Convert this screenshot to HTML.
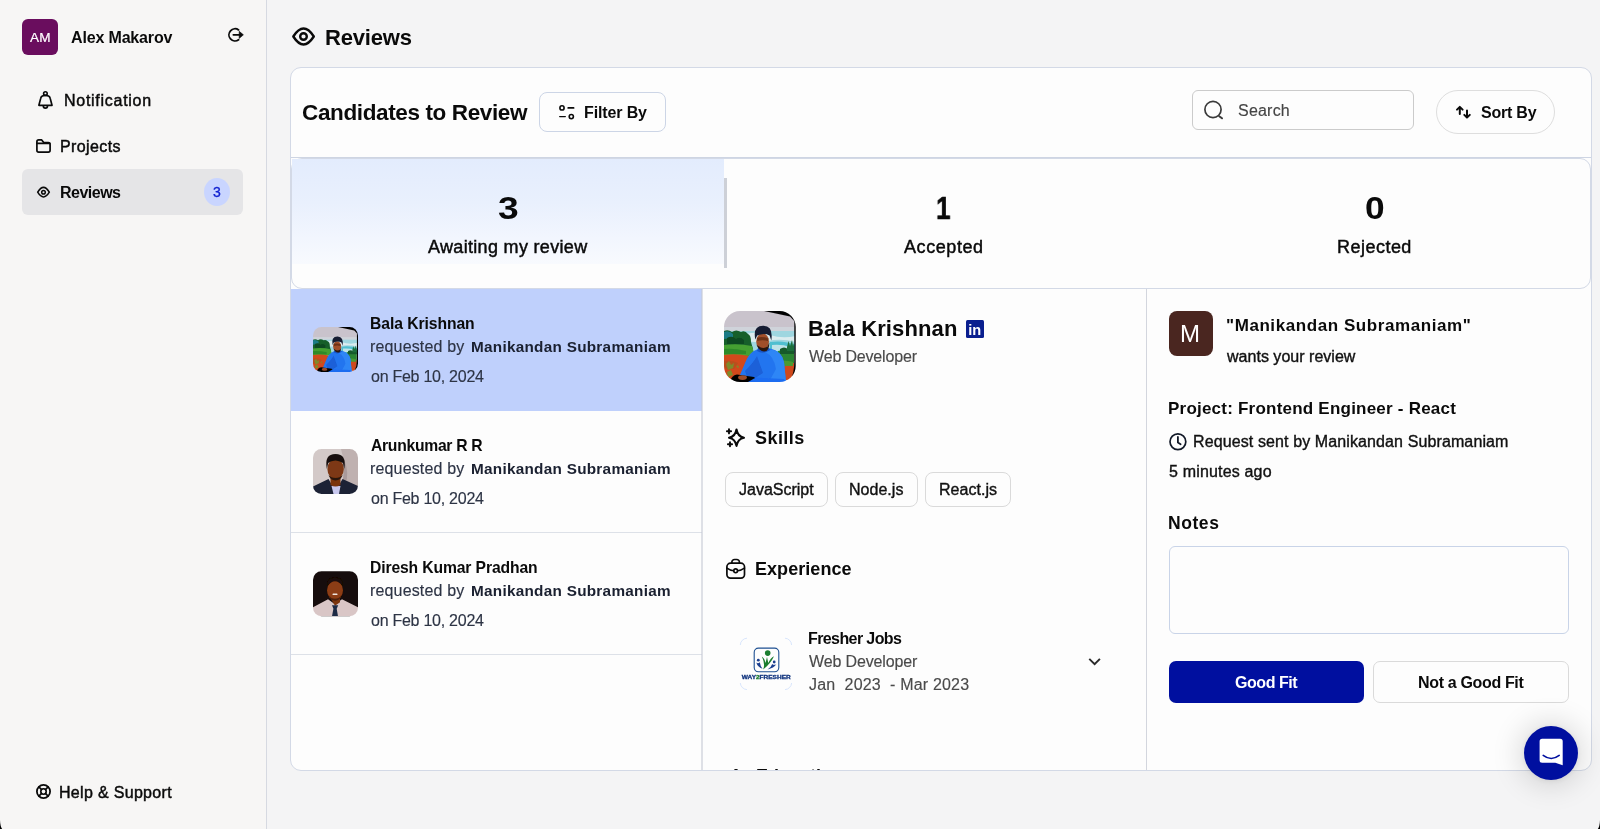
<!DOCTYPE html>
<html lang="en">
<head>
<meta charset="utf-8">
<title>Reviews</title>
<style>
*{box-sizing:border-box;margin:0;padding:0}
html,body{width:1600px;height:829px;overflow:hidden}
body{font-family:"Liberation Sans",sans-serif;background:#f4f4f5;color:#0a0a0a;position:relative}
.abs{position:absolute}
.t{position:absolute;white-space:nowrap;line-height:1;will-change:transform}
svg{position:absolute;overflow:visible}
.ic{fill:none;stroke:#0a0a0a;stroke-linecap:round;stroke-linejoin:round}
#side{left:0;top:0;width:267px;height:829px;background:#f7f6f5;border-right:1px solid #d6d9e1}
#ambox{left:22px;top:19px;width:36px;height:36px;border-radius:6px;background:#6a0d5e}
#active{left:22px;top:169px;width:221px;height:46px;border-radius:6px;background:#e5e5e7}
#badge{left:204px;top:178px;width:26px;height:28px;border-radius:50%;background:#c9d5ff}
#card{left:290px;top:67px;width:1302px;height:704px;border:1px solid #d3d9e6;border-radius:11px;background:#fdfdfd}
#hdrline{left:291px;top:157px;width:1300px;height:1px;background:#ced5e3}
#stats{left:291px;top:158px;width:1300px;height:131px;border:1px solid #d3d9e6;border-radius:11px;background:#fdfdfd}
#await{left:292px;top:158.6px;width:432px;height:105.6px;background:linear-gradient(#e3ecfd 0%,#e9f0fd 42%,#f2f6fe 76%,#f8fafe 100%)}
#vbar{left:724px;top:178px;width:3px;height:90px;background:#cdd0d7}
.btn{position:absolute;border:1px solid #ccd5e6;background:#fdfdfd}
#filter{left:539px;top:92px;width:127px;height:40px;border-radius:8px}
#search{left:1192px;top:90px;width:222px;height:40px;border-radius:6px;border-color:#cbcbcb}
#sort{left:1436px;top:90px;width:119px;height:44px;border-radius:22px;border-color:#dedede}
#sel{left:291px;top:289px;width:410.5px;height:121.6px;background:#bfd0fc}
.hl{position:absolute;left:291px;width:411px;height:1px;background:#dde1e8}
.vl{position:absolute;top:289px;width:1px;height:481px;background:#d3d6de}
.av{position:absolute;left:313px;width:45px;height:45px;border-radius:9px;overflow:hidden}
.chip{position:absolute;top:471.5px;height:35px;border:1px solid #dadada;border-radius:8px;background:#fdfdfd}
</style>
</head>
<body>
<div id="side" class="abs"></div>
<div id="ambox" class="abs"></div>
<div id="active" class="abs"></div>
<div id="badge" class="abs"></div>
<div id="card" class="abs"></div>
<div id="hdrline" class="abs"></div>
<div id="filter" class="btn"></div>
<div id="search" class="btn"></div>
<div id="sort" class="btn"></div>
<div id="stats" class="abs"></div><div id="await" class="abs"></div>
<div id="vbar" class="abs"></div>
<div id="sel" class="abs"></div>
<div class="hl" style="top:532px"></div>
<div class="hl" style="top:654px"></div>
<div class="vl" style="left:701px;width:2px;background:rgba(196,201,212,.55)"></div>
<div class="vl" style="left:1146px"></div>
<div class="abs" id="li" style="left:965.5px;top:319.5px;width:18.5px;height:18px;background:#0a1f8f;border-radius:1.5px"></div>
<div class="chip" style="left:724.5px;width:103.5px"></div>
<div class="chip" style="left:835px;width:82.5px"></div>
<div class="chip" style="left:924.5px;width:86.5px"></div>
<div class="abs" id="mbox" style="left:1169px;top:311px;width:44px;height:45px;border-radius:8px;background:#4a2620"></div>
<div class="abs" id="ta" style="left:1169px;top:545.5px;width:399.5px;height:88px;border:1px solid #c9d4e8;border-radius:6px;background:#fdfdfd"></div>
<div class="abs" id="gfb" style="left:1169px;top:661px;width:195px;height:42px;border-radius:7px;background:#000f9f"></div>
<div class="abs" id="ngfb" style="left:1373px;top:661px;width:195.5px;height:42px;border-radius:7px;border:1px solid #dadada;background:#fdfdfd"></div>
<div class="abs" id="chat" style="left:1524px;top:725.5px;width:54px;height:54px;border-radius:50%;background:#000f9f;box-shadow:0 1px 28px 6px rgba(0,0,0,.13),0 1px 5px rgba(0,0,0,.08)"></div>
<div class="abs" style="left:703px;top:760px;width:442px;height:10px;overflow:hidden"><div class="t" style="left:53px;top:7.4px;font-size:18px;font-weight:700">Education</div><div class="abs" style="left:31px;top:9.2px;width:4px;height:3px;background:#0a0a0a;border-radius:2px"></div></div>
<svg width="1600" height="829" viewBox="0 0 1600 829" style="left:0;top:0">
<defs>
<filter id="bl1" x="-5%" y="-5%" width="110%" height="110%"><feGaussianBlur stdDeviation="0.55"/></filter>
<filter id="bl2" x="-5%" y="-5%" width="110%" height="110%"><feGaussianBlur stdDeviation="0.45"/></filter>
<clipPath id="cp0"><rect x="313" y="327" width="45" height="45" rx="8.5"/></clipPath>
<clipPath id="cp1"><rect x="313" y="449" width="45" height="45" rx="8.5"/></clipPath>
<clipPath id="cp2"><rect x="313" y="571.3" width="45" height="45" rx="8.5"/></clipPath>
<clipPath id="cpp"><rect x="724" y="311" width="71.7" height="71" rx="16"/></clipPath>
<g id="bala">
  <rect x="-3" y="-3" width="78" height="77" fill="#c9c3cc"/>
  <rect x="0" y="16" width="72" height="6" fill="#cfd3da"/>
  <rect x="0" y="20" width="72" height="22" fill="#9fd6e0"/>
  <path d="M22,23 Q34,20 46,24 T72,25 V31 Q56,27 44,30 T22,29Z" fill="#dcecef"/>
  <path d="M46,31 Q60,29 72,34 V42 H46Z" fill="#4fbfd0"/>
  <path d="M48,34 Q58,33 66,36 L66,40 H48Z" fill="#bfe3e8"/>
  <path d="M0,20 Q4,18 8,21 Q12,18 17,21 Q21,19 24,23 Q27,24 27,31 L29,38 L0,38Z" fill="#185f2c"/>
  <path d="M0,21 Q5,19 9,23 L9,27 L0,28Z" fill="#1c7b86"/>
  <path d="M3,27 Q8,24 12,28 Q16,25 20,29 L20,33 H3Z" fill="#0f4a22"/>
  <path d="M0,34 Q14,32 28,35 L31,45 H0Z" fill="#44a030"/>
  <path d="M0,38 Q10,37 22,40 L22,43 H0Z" fill="#2f8a2b"/>
  <path d="M54,40 Q62,37 70,40 V53 H54Z" fill="#2c8533"/>
  <path d="M56,38 Q60,35 64,38 Q67,34 70,37 V43 H56Z" fill="#165a2c"/>
  <path d="M63,36 l1.5,-6 1.5,5 2,-6 1,6 1,-3 v8 h-7Z" fill="#1f6e3a"/>
  <path d="M0,44 Q12,42 25,45 L20,71 H0Z" fill="#d2481b"/>
  <path d="M0,50 Q8,49 14,52 L10,58 L0,57Z" fill="#b9501f"/>
  <path d="M53,52 H70 V69 H53Z" fill="#cf4a1c"/>
  <path d="M56,50 Q62,49 69,51 V55 H56Z" fill="#4a9a30"/>
  <path d="M2,53 l3,-3 2,4 3,-2 -1,5 -5,2Z M3,61 l4,-2 2,5 -5,2Z M12,56 l2,-2 1,3Z" fill="#7f8a2a"/>
  <path d="M13,71 L21,52 Q25,41 33,38.5 L46,37.5 Q58,40 60,51 L62,71Z" fill="#2475ef"/>
  <path d="M21,60 Q30,51 33,45 L39,62 L25,71Z" fill="#1a60d8"/>
  <path d="M41,41 Q50,45 52,58 L45,71 L62,71 60,51 Q58,41 48,38.5Z" fill="#2f86f6"/>
  <path d="M33,40 Q39,44 46,39 L45,37 H34Z" fill="#1857c8"/>
  <ellipse cx="38.6" cy="30.5" rx="6.4" ry="8" fill="#a14f2a"/>
  <path d="M33,27 Q38,25 44.5,27.5 L44,30 Q38.5,28.5 33.3,30Z" fill="#6d3219"/>
  <path d="M32.6,34 Q36,42 42.5,40 Q45.5,37 45.3,31.5 L43.6,35.5 Q39,38.5 34.4,35Z" fill="#2b1711"/>
  <path d="M31.3,28.5 Q28.5,14.5 39.5,14.8 Q49.5,15 47.3,29.5 L45.6,24.5 Q40,21.5 33.2,24.6Z" fill="#131c33"/>
  <path d="M6,71 Q7,64.5 13,63.5 L30,66 L35,71Z" fill="#050505"/>
  <ellipse cx="18.5" cy="66.6" rx="4.4" ry="2.4" fill="#9c4d2a"/>
  <path d="M24,71 L32,66.5 L60,68 L62,71Z" fill="#1f6cf0"/>
  <path d="M40,0 H72 V12 L66,5.5Z" fill="#050505"/>
  <path d="M70.3,9 H72 V66 L68,71 H66 Q70.3,62 70.3,50Z" fill="#050505"/>
</g>
</defs>
<path d="M0,820 Q0.2,826.5 2.2,829 H0Z M1600,820 Q1599.8,826.5 1597.8,829 H1600Z" fill="#000"/>
<!-- logout -->
<path class="ic" stroke-width="1.8" d="M238.6,29.9 A6.1,6.1 0 1 0 238.6,39.8"/>
<path class="ic" stroke-width="1.9" stroke-linecap="butt" d="M233.4,34.85 H240"/>
<path d="M239.2,31.3 L243.4,34.85 L239.2,38.4Z" fill="#0a0a0a" stroke="#0a0a0a" stroke-width=".6" stroke-linejoin="round"/>
<!-- bell -->
<circle class="ic" stroke-width="1.6" cx="45.4" cy="93.6" r="1.8"/>
<path class="ic" stroke-width="1.7" d="M38.9,105.3 H52 L50.2,98.4 C49.6,95.6 47.6,95.4 45.4,95.4 C43.2,95.4 41.2,95.6 40.7,98.4 Z"/>
<path class="ic" stroke-width="1.7" d="M43.3,105.8 A2.1,2.4 0 0 0 47.5,105.8"/>
<!-- folder -->
<path class="ic" stroke-width="1.7" d="M36.9,150.3 V141.7 A1.8,1.8 0 0 1 38.7,139.9 H41.7 L43.7,142.6 H48.3 A1.8,1.8 0 0 1 50.1,144.4 V150.3 A1.8,1.8 0 0 1 48.3,152.1 H38.7 A1.8,1.8 0 0 1 36.9,150.3 Z"/>
<path class="ic" stroke-width="1.6" d="M37,143.4 H49.8"/>
<!-- eye small -->
<path class="ic" stroke-width="1.6" d="M37.7,192.2 Q43.5,182.6 49.3,192.2 Q43.5,201.7 37.7,192.2Z"/>
<circle class="ic" stroke-width="1.5" cx="43.5" cy="192.2" r="1.8"/>
<!-- lifebuoy -->
<circle class="ic" stroke-width="1.8" cx="43.5" cy="791.5" r="6.6"/>
<circle class="ic" stroke-width="1.6" cx="43.5" cy="791.5" r="2.7"/>
<path class="ic" stroke-width="1.6" d="M38.9,786.9 L41.6,789.6 M48.1,786.9 L45.4,789.6 M38.9,796.1 L41.6,793.4 M48.1,796.1 L45.4,793.4"/>
<!-- eye large -->
<path class="ic" stroke-width="2.4" d="M293.3,36.5 Q303.5,20.6 313.8,36.5 Q303.5,52.4 293.3,36.5Z"/>
<circle class="ic" stroke-width="2.4" cx="303.5" cy="36.5" r="3.3"/>
<!-- filter -->
<circle class="ic" stroke-width="1.6" cx="562" cy="107.9" r="2.1"/>
<path class="ic" stroke-width="1.7" d="M568.2,107.9 H573.6"/>
<path class="ic" stroke-width="1.4" d="M559.7,116.6 H565.3"/>
<circle class="ic" stroke-width="1.6" cx="571.3" cy="116.6" r="2.1"/>
<!-- search -->
<circle cx="1213" cy="109.5" r="8.1" fill="none" stroke="#3a3a3a" stroke-width="1.7"/>
<path d="M1219.2,116.2 L1222,118.3" stroke="#3a3a3a" stroke-width="2" stroke-linecap="round"/>
<!-- sort -->
<path class="ic" stroke-width="2" d="M1459.8,114 V107.3 M1457,109.6 L1459.8,106.9 L1462.6,109.6"/>
<path class="ic" stroke-width="2" d="M1467,110.6 V117.4 M1464.3,114.9 L1467,117.6 L1469.8,114.9"/>
<!-- sparkle -->
<path class="ic" stroke-width="2.1" d="M736.5,429.5 Q737.7,436.5 744,437.7 Q737.7,438.9 736.5,445.9 Q735.3,438.9 729,437.7 Q735.3,436.5 736.5,429.5Z"/>
<path class="ic" stroke-width="1.9" d="M729,429.2 V433.4 M726.9,431.3 H731.1 M730,442.1 V446.3 M727.9,444.2 H732.1"/>
<!-- briefcase -->
<rect class="ic" stroke-width="1.7" x="726.9" y="563.2" width="17.6" height="14.9" rx="3.6"/>
<path class="ic" stroke-width="1.7" d="M731.9,563.2 V562.1 A2.6,2.6 0 0 1 734.5,559.5 H736.8 A2.6,2.6 0 0 1 739.4,562.1 V563.2"/>
<path class="ic" stroke-width="1.6" d="M726.9,568.2 Q730.5,570.7 733.7,570.8 M737.6,570.8 Q740.8,570.7 744.5,568.2"/>
<circle class="ic" stroke-width="1.6" cx="735.65" cy="570.8" r="1.9"/>
<!-- chevron -->
<path d="M1090,659.6 L1094.6,664.1 L1099.2,659.6" fill="none" stroke="#2a2a2a" stroke-width="2" stroke-linecap="square"/>
<!-- clock -->
<circle cx="1177.9" cy="441.7" r="7.9" fill="none" stroke="#111827" stroke-width="1.7"/>
<path d="M1177.9,437 V442.6 L1180.6,444.2" fill="none" stroke="#111827" stroke-width="1.8" stroke-linecap="round" stroke-linejoin="round"/>
<!-- chat -->
<path d="M1542.1,738.8 H1560.2 A2.5,2.5 0 0 1 1562.7,741.3 V765.2 L1555.3,762.8 H1542.1 A2.5,2.5 0 0 1 1539.6,760.3 V741.3 A2.5,2.5 0 0 1 1542.1,738.8Z" fill="#fff"/>
<path d="M1543.2,755.4 Q1551.2,761.6 1559.2,755.4" fill="none" stroke="#000f9f" stroke-width="1.6" stroke-linecap="round"/>
<!-- avatars -->
<g clip-path="url(#cp0)"><g filter="url(#bl2)"><use href="#bala" transform="translate(313,327) scale(0.625,0.634)"/></g></g>
<g clip-path="url(#cpp)"><g filter="url(#bl1)"><use href="#bala" transform="translate(724,311)"/></g></g>
<g clip-path="url(#cp1)"><g transform="translate(313,449)" filter="url(#bl2)">
  <rect x="-3" y="-3" width="51" height="51" fill="#d3c9c8"/>
  <path d="M28,0 H45 V40 H30 Q34,20 28,0Z" fill="#bfb1b0"/>
  <path d="M31,10 Q37,25 32,36 L29,34 Q32,22 29,12Z" fill="#a99a9b"/>
  <path d="M0,37.5 L15.5,30 L19,36 H26 L29.5,30 L45,37 V45 H0Z" fill="#1a2234"/>
  <path d="M18.5,37 H27.5 L26,45 H20.5Z" fill="#c8c8ee"/>
  <path d="M17.5,26 H27.5 V36 Q22.5,39 17.5,36Z" fill="#7a3611"/>
  <ellipse cx="22.6" cy="20" rx="8.2" ry="10.3" fill="#7d3812"/>
  <path d="M15.5,26 Q17,31 22.5,31.5 Q28,31 29.8,26 Q27,29 22.5,29 Q18,29 15.5,26Z" fill="#2a140c"/>
  <path d="M13.8,20 Q11,5 22.5,5 Q34,5 31.3,20 L30,14 Q26,11.5 22.5,11.5 Q18,11.5 15.2,14Z" fill="#17100f"/>
</g></g>
<g clip-path="url(#cp2)"><g transform="translate(313,571.3)" filter="url(#bl2)">
  <rect x="-3" y="-3" width="51" height="51" fill="#130707"/>
  <path d="M0,36 L15,28 L22,33 L29,28 L45,36 V45 H0Z" fill="#d9c6c6"/>
  <path d="M17.5,27 H27 V31 L22,34.5 Z" fill="#7c3410"/>
  <ellipse cx="22" cy="19" rx="8" ry="10" fill="#8c3c12"/>
  <path d="M14.5,15 Q13,6 22,6.5 Q31,6 29.6,15 Q26,10 22,10 Q18,10 14.5,15Z" fill="#1a0a07"/>
  <path d="M15.5,24 Q17,29 22,29.5 Q27,29 28.6,24 Q26,27.5 22,27.5 Q18,27.5 15.5,24Z" fill="#4a200d"/>
  <rect x="19.5" y="22.3" width="5" height="1.5" rx=".7" fill="#f0e6e0"/>
  <path d="M19,34 H25.2 L23.7,37.5 L25,45 H19 L20.4,37.5Z" fill="#1e2a44"/>
</g></g>
<!-- logo -->
<g fill="none" stroke="#cfe0fb" stroke-width="0.8">
<path d="M740.3,645 A7,7 0 0 1 747,638.2 M785,638.2 A7,7 0 0 1 791.6,645 M791.6,683 A7,7 0 0 1 785,689.6 M747,689.6 A7,7 0 0 1 740.3,683"/>
</g>
<rect x="754.2" y="648.1" width="24.6" height="23.7" rx="4.2" fill="none" stroke="#1d4f91" stroke-width="1.1"/>
<circle cx="767.7" cy="653.1" r="2.8" fill="#1a7d2e"/>
<path d="M761.8,656.6 Q764.5,658 765.5,663 L767,657 L768.3,663 Q770.5,658 774,656.2 Q771,663 763.2,669.6 Q765.5,664 761.8,656.6Z" fill="#1a7d2e"/>
<circle cx="758.3" cy="660.2" r="1.4" fill="#1b3f8f"/>
<path d="M756.3,662.5 Q758,664 759.8,662.3 Q760.2,666 762.5,668.8 Q757.5,667 756.3,662.5Z" fill="#1b3f8f"/>
<circle cx="774.2" cy="662" r="1.4" fill="#1b3f8f"/>
<path d="M772.2,664 Q774,665.6 776.3,664.2 Q774,668 767.5,669.4 Q771.5,667 772.2,664Z" fill="#1b3f8f"/>
<text x="741.8" y="678.9" font-family="Liberation Sans, sans-serif" font-weight="700" font-size="5.4" fill="#12357f" textLength="48.9" lengthAdjust="spacingAndGlyphs" stroke="#12357f" stroke-width=".3">WAY<tspan fill="#1a7d2e" stroke="#1a7d2e">2</tspan>FRESHER</text>
<!-- linkedin "in" -->
<text x="968.2" y="334.5" font-family="Liberation Sans, sans-serif" font-weight="700" font-size="15.5" fill="#fff" textLength="13" lengthAdjust="spacingAndGlyphs">in</text>
</svg>

<div class="t" id="am" style="left:29.60px;top:31.94px;font-size:12px;font-weight:400;color:#fff;letter-spacing:0.290px;-webkit-text-stroke:0.2px #fff;transform:scaleX(1.13);transform-origin:0 50%;">AM</div>
<div class="t" id="alex" style="left:71.34px;top:30.46px;font-size:16px;font-weight:700;color:#0a0a0a;letter-spacing:-0.157px;">Alex Makarov</div>
<div class="t" id="notif" style="left:63.85px;top:93.21px;font-size:16px;font-weight:400;color:#0a0a0a;letter-spacing:0.723px;-webkit-text-stroke:0.45px #0a0a0a;">Notification</div>
<div class="t" id="proj" style="left:59.80px;top:139.21px;font-size:16px;font-weight:400;color:#0a0a0a;letter-spacing:0.384px;-webkit-text-stroke:0.45px #0a0a0a;">Projects</div>
<div class="t" id="rev" style="left:59.91px;top:185.46px;font-size:16px;font-weight:700;color:#0a0a0a;letter-spacing:-0.505px;">Reviews</div>
<div class="t" id="bdg" style="left:213.00px;top:184.90px;font-size:14px;font-weight:400;color:#1020d0;letter-spacing:0.000px;-webkit-text-stroke:0.3px #1020d0;">3</div>
<div class="t" id="help" style="left:59.20px;top:785.21px;font-size:16px;font-weight:400;color:#0a0a0a;letter-spacing:0.316px;-webkit-text-stroke:0.45px #0a0a0a;">Help &amp; Support</div>
<div class="t" id="title" style="left:324.52px;top:26.98px;font-size:22px;font-weight:700;color:#0a0a0a;letter-spacing:-0.170px;">Reviews</div>
<div class="t" id="cand" style="left:302.00px;top:101.95px;font-size:22.5px;font-weight:700;color:#0a0a0a;letter-spacing:-0.371px;">Candidates to Review</div>
<div class="t" id="filt" style="left:583.91px;top:105.46px;font-size:16px;font-weight:700;color:#0a0a0a;letter-spacing:-0.127px;">Filter By</div>
<div class="t" id="srch" style="left:1237.58px;top:103.06px;font-size:16px;font-weight:400;color:#444;letter-spacing:0.209px;-webkit-text-stroke:0.15px #444;">Search</div>
<div class="t" id="sortt" style="left:1481.25px;top:105.46px;font-size:16px;font-weight:700;color:#0a0a0a;letter-spacing:-0.228px;">Sort By</div>
<div class="t" id="n3" style="left:497.86px;top:192.76px;font-size:31px;font-weight:700;color:#0a0a0a;letter-spacing:0.000px;transform:scaleX(1.2);transform-origin:0 50%;">3</div>
<div class="t" id="n1" style="left:935.56px;top:192.51px;font-size:31px;font-weight:700;color:#0a0a0a;letter-spacing:0.000px;-webkit-text-stroke:0.7px #0a0a0a;transform:scaleX(0.84);transform-origin:0 50%;">1</div>
<div class="t" id="n0" style="left:1364.59px;top:192.76px;font-size:31px;font-weight:700;color:#0a0a0a;letter-spacing:0.000px;transform:scaleX(1.14);transform-origin:0 50%;">0</div>
<div class="t" id="l3" style="left:428.29px;top:237.51px;font-size:18px;font-weight:400;color:#0a0a0a;letter-spacing:0.319px;-webkit-text-stroke:0.45px #0a0a0a;">Awaiting my review</div>
<div class="t" id="l1" style="left:903.79px;top:237.51px;font-size:18px;font-weight:400;color:#0a0a0a;letter-spacing:0.570px;-webkit-text-stroke:0.45px #0a0a0a;">Accepted</div>
<div class="t" id="l0" style="left:1336.75px;top:237.51px;font-size:18px;font-weight:400;color:#0a0a0a;letter-spacing:0.477px;-webkit-text-stroke:0.45px #0a0a0a;">Rejected</div>
<div class="t" id="bk" style="left:807.52px;top:318.38px;font-size:22px;font-weight:700;color:#0a0a0a;letter-spacing:0.118px;">Bala Krishnan</div>
<div class="t" id="wd" style="left:809.44px;top:349.46px;font-size:16px;font-weight:400;color:#4a4a4a;letter-spacing:-0.165px;-webkit-text-stroke:0.15px #4a4a4a;">Web Developer</div>
<div class="t" id="sk" style="left:755.42px;top:428.76px;font-size:18px;font-weight:700;color:#0a0a0a;letter-spacing:0.438px;">Skills</div>
<div class="t" id="c1" style="left:739.00px;top:482.21px;font-size:16px;font-weight:400;color:#111;letter-spacing:0.000px;-webkit-text-stroke:0.38px #111;">JavaScript</div>
<div class="t" id="c2" style="left:848.66px;top:482.21px;font-size:16px;font-weight:400;color:#111;letter-spacing:0.030px;-webkit-text-stroke:0.38px #111;">Node.js</div>
<div class="t" id="c3" style="left:938.83px;top:482.21px;font-size:16px;font-weight:400;color:#111;letter-spacing:0.039px;-webkit-text-stroke:0.38px #111;">React.js</div>
<div class="t" id="ex" style="left:754.78px;top:559.76px;font-size:18px;font-weight:700;color:#0a0a0a;letter-spacing:0.052px;">Experience</div>
<div class="t" id="fj" style="left:807.91px;top:631.46px;font-size:16px;font-weight:700;color:#0a0a0a;letter-spacing:-0.596px;">Fresher Jobs</div>
<div class="t" id="wd2" style="left:808.81px;top:654.46px;font-size:16px;font-weight:400;color:#4a4a4a;letter-spacing:-0.135px;-webkit-text-stroke:0.15px #4a4a4a;">Web Developer</div>
<div class="t" id="dt" style="left:808.77px;top:677.46px;font-size:16px;font-weight:400;color:#4a4a4a;letter-spacing:0.177px;-webkit-text-stroke:0.15px #4a4a4a;">Jan  2023  - Mar 2023</div>
<div class="t" id="ms" style="left:1225.83px;top:316.61px;font-size:17px;font-weight:700;color:#0a0a0a;letter-spacing:0.577px;">"Manikandan Subramaniam"</div>
<div class="t" id="wy" style="left:1226.82px;top:349.21px;font-size:16px;font-weight:400;color:#111;letter-spacing:0.020px;-webkit-text-stroke:0.38px #111;">wants your review</div>
<div class="t" id="pr" style="left:1167.84px;top:399.61px;font-size:17px;font-weight:700;color:#0a0a0a;letter-spacing:0.221px;">Project: Frontend Engineer - React</div>
<div class="t" id="rs" style="left:1192.83px;top:434.21px;font-size:16px;font-weight:400;color:#111;letter-spacing:0.111px;-webkit-text-stroke:0.38px #111;">Request sent by Manikandan Subramaniam</div>
<div class="t" id="ma" style="left:1169.31px;top:464.21px;font-size:16px;font-weight:400;color:#111;letter-spacing:0.174px;-webkit-text-stroke:0.38px #111;">5 minutes ago</div>
<div class="t" id="nt" style="left:1167.81px;top:515.19px;font-size:17.5px;font-weight:700;color:#0a0a0a;letter-spacing:0.565px;">Notes</div>
<div class="t" id="gf" style="left:1235.05px;top:675.46px;font-size:16px;font-weight:700;color:#fff;letter-spacing:-0.441px;">Good Fit</div>
<div class="t" id="ngf" style="left:1417.91px;top:675.46px;font-size:16px;font-weight:700;color:#0a0a0a;letter-spacing:-0.339px;">Not a Good Fit</div>
<div class="t" id="mm" style="left:1180.00px;top:322.08px;font-size:24px;font-weight:400;color:#fff;letter-spacing:0.000px;">M</div>
<div class="t" id="r0n" style="left:370.38px;top:315.71px;font-size:15.7px;font-weight:700;color:#0a0a0a;letter-spacing:-0.070px;">Bala Krishnan</div>
<div class="t" id="r0q" style="left:369.91px;top:339.46px;font-size:16px;font-weight:400;color:#2d3445;letter-spacing:0.153px;-webkit-text-stroke:0.15px #2d3445;">requested by</div>
<div class="t" id="r0m" style="left:471.46px;top:339.05px;font-size:15.3px;font-weight:700;color:#1a2030;letter-spacing:0.274px;">Manikandan Subramaniam</div>
<div class="t" id="r0d" style="left:371.29px;top:369.46px;font-size:16px;font-weight:400;color:#2d3445;letter-spacing:-0.259px;-webkit-text-stroke:0.15px #2d3445;">on Feb 10, 2024</div>
<div class="t" id="r1n" style="left:371.23px;top:438.11px;font-size:15.7px;font-weight:700;color:#0a0a0a;letter-spacing:-0.282px;">Arunkumar R R</div>
<div class="t" id="r1q" style="left:369.91px;top:460.86px;font-size:16px;font-weight:400;color:#2d3445;letter-spacing:0.153px;-webkit-text-stroke:0.15px #2d3445;">requested by</div>
<div class="t" id="r1m" style="left:471.46px;top:461.45px;font-size:15.3px;font-weight:700;color:#1a2030;letter-spacing:0.274px;">Manikandan Subramaniam</div>
<div class="t" id="r1d" style="left:371.29px;top:490.86px;font-size:16px;font-weight:400;color:#2d3445;letter-spacing:-0.259px;-webkit-text-stroke:0.15px #2d3445;">on Feb 10, 2024</div>
<div class="t" id="r2n" style="left:369.94px;top:560.11px;font-size:15.7px;font-weight:700;color:#0a0a0a;letter-spacing:-0.128px;">Diresh Kumar Pradhan</div>
<div class="t" id="r2q" style="left:369.91px;top:582.86px;font-size:16px;font-weight:400;color:#2d3445;letter-spacing:0.153px;-webkit-text-stroke:0.15px #2d3445;">requested by</div>
<div class="t" id="r2m" style="left:471.46px;top:583.45px;font-size:15.3px;font-weight:700;color:#1a2030;letter-spacing:0.274px;">Manikandan Subramaniam</div>
<div class="t" id="r2d" style="left:371.29px;top:612.86px;font-size:16px;font-weight:400;color:#2d3445;letter-spacing:-0.259px;-webkit-text-stroke:0.15px #2d3445;">on Feb 10, 2024</div>
</body>
</html>
